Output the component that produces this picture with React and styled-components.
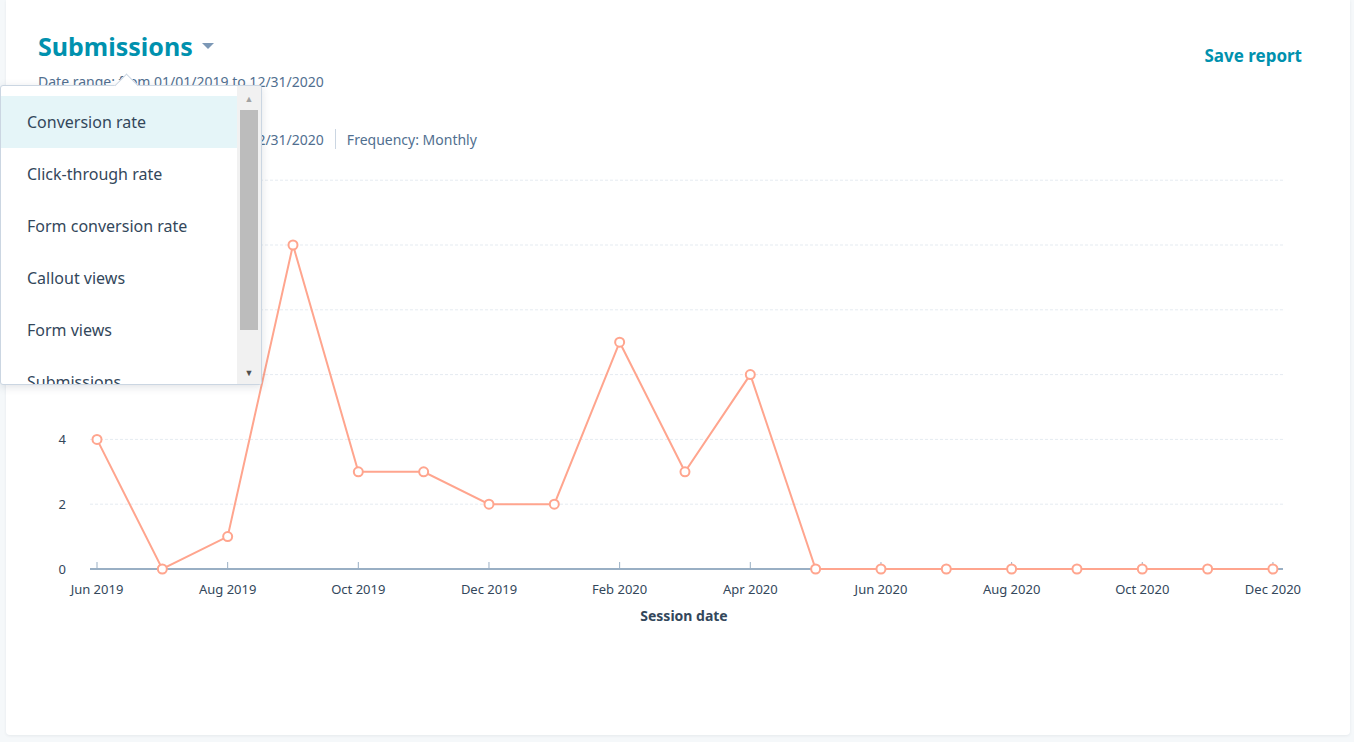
import styled, { createGlobalStyle } from "styled-components";

const Global = createGlobalStyle`
  body { margin: 0; background: #f5f8fa; font-family: "Noto Sans", Lato, sans-serif; }
`;

const Page = styled.div`
  position: relative;
  width: 1354px;
  height: 742px;
  padding: 0 4px 7px 6px;
  box-sizing: border-box;
`;

const Card = styled.div`
  background: #fff;
  height: 100%;
  border-radius: 0 0 4px 4px;
  box-shadow: 0 1px 3px rgba(45, 62, 80, 0.08);
  padding: 28px 48px 0 32px;
  box-sizing: border-box;
`;

const Header = styled.div`
  display: flex;
  justify-content: space-between;
  align-items: flex-start;
`;

const Title = styled.div`
  font-size: 25px;
  font-weight: 700;
  color: #0091ae;
  display: flex;
  align-items: center;
  gap: 9px;
  line-height: 36px;
`;

const Caret = styled.span`
  width: 0;
  height: 0;
  border-left: 6px solid transparent;
  border-right: 6px solid transparent;
  border-top: 6px solid #7c98b6;
`;

const Save = styled.div`
  margin-top: 16px;
  font-size: 17px;
  font-weight: 700;
  color: #0091ae;
`;

const Meta = styled.div`
  font-size: 14px;
  color: #516f90;
  margin-top: ${(p) => p.$top}px;
  display: flex;
  align-items: center;
`;

const Divider = styled.span`
  width: 1px;
  height: 20px;
  background: #cbd6e2;
  margin: 0 11px;
`;

const Chart = styled.svg`
  display: block;
  margin: 0 0 0 -38px;
`;

const Menu = styled.div`
  position: absolute;
  left: 0;
  top: 85px;
  width: 260px;
  height: 298px;
  background: #fff;
  border: 1px solid #cbd6e2;
  border-radius: 3px;
  box-shadow: 0 2px 8px rgba(45, 62, 80, 0.15);
  display: flex;
`;

const Pointer = styled.div`
  position: absolute;
  left: 117px;
  top: -9px;
  width: 16px;
  height: 16px;
  background: #fff;
  border-left: 1px solid #cbd6e2;
  border-top: 1px solid #cbd6e2;
  transform: rotate(45deg);
`;

const Items = styled.div`
  flex: 1;
  padding-top: 10px;
  overflow: hidden;
  position: relative;
`;

const Item = styled.div`
  height: 52px;
  display: flex;
  align-items: center;
  padding-left: 26px;
  font-size: 16px;
  color: #33475b;
  background: ${(p) => (p.$active ? "#e5f5f8" : "transparent")};
`;

const Scroll = styled.div`
  width: 24px;
  background: #f1f1f1;
  display: flex;
  flex-direction: column;
  align-items: center;
  position: relative;
  z-index: 1;
`;

const Thumb = styled.div`
  width: 18px;
  height: 220px;
  background: #bcbcbc;
`;

const Arrow = styled.div`
  height: 24px;
  display: flex;
  align-items: center;
  font-size: 9px;
  color: ${(p) => p.$c};
`;

const data = [4, 0, 1, 10, 3, 3, 2, 2, 7, 3, 6, 0, 0, 0, 0, 0, 0, 0, 0];
const labels = ["Jun 2019", "Aug 2019", "Oct 2019", "Dec 2019", "Feb 2020", "Apr 2020", "Jun 2020", "Aug 2020", "Oct 2020", "Dec 2020"];

export default function App() {
  const x = (i) => 97 + i * 65.33;
  const y = (v) => 420 - v * 32.4;
  const pts = data.map((v, i) => `${x(i)},${y(v)}`).join(" ");
  return (
    <Page>
      <Global />
      <Card>
        <Header>
          <div>
            <Title>Submissions <Caret /></Title>
            <Meta $top={8}>Date range: from 01/01/2019 to 12/31/2020</Meta>
            <Meta $top={38}>
              Date range: from 01/01/2019 to 12/31/2020<Divider />Frequency: Monthly
            </Meta>
          </div>
          <Save>Save report</Save>
        </Header>
        <Chart width="1310" height="490" viewBox="0 0 1310 490">
          {[2, 4, 6, 8, 10, 12].map((v) => (
            <line key={v} x1="90" x2="1283" y1={y(v)} y2={y(v)} stroke="#e5ebf1" strokeDasharray="3 2" />
          ))}
          {[0, 2, 4, 6].map((v) => (
            <text key={v} x="66" y={y(v) + 5} textAnchor="end" fontSize="13" fill="#33475b">{v}</text>
          ))}
          <line x1="90" x2="1283" y1={y(0)} y2={y(0)} stroke="#99afc4" strokeWidth="2" />
          {labels.map((l, k) => (
            <g key={l}>
              <line x1={x(k * 2)} x2={x(k * 2)} y1={y(0) - 7} y2={y(0)} stroke="#99afc4" />
              <text x={x(k * 2)} y={y(0) + 25} textAnchor="middle" fontSize="13" fill="#33475b">{l}</text>
            </g>
          ))}
          <polyline points={pts} fill="none" stroke="#ffa58e" strokeWidth="2" />
          {data.map((v, i) => (
            <circle key={i} cx={x(i)} cy={y(v)} r="4.5" fill="#fff" stroke="#ffa58e" strokeWidth="2" />
          ))}
          <text x="684" y={y(0) + 52} textAnchor="middle" fontSize="14" fontWeight="700" fill="#33475b">Session date</text>
        </Chart>
      </Card>
      <Menu>
        <Pointer />
        <Items>
          <Item $active>Conversion rate</Item>
          <Item>Click-through rate</Item>
          <Item>Form conversion rate</Item>
          <Item>Callout views</Item>
          <Item>Form views</Item>
          <Item>Submissions</Item>
        </Items>
        <Scroll>
          <Arrow $c="#a3a3a3">▲</Arrow>
          <Thumb />
          <div style={{ flex: 1 }} />
          <Arrow $c="#505050">▼</Arrow>
        </Scroll>
      </Menu>
    </Page>
  );
}
